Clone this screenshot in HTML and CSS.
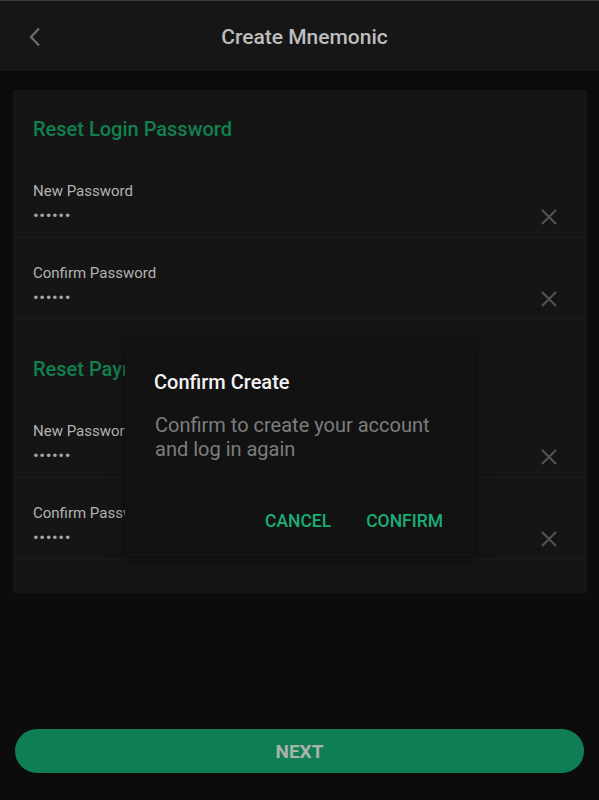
FILE: index.html
```html
<!DOCTYPE html>
<html>
<head>
<meta charset="utf-8">
<link rel="stylesheet" href="styles.css">
</head>
<body>
<div class="page">
  <header class="header">
    <button class="back" aria-label="Back">
      <svg width="14" height="20" viewBox="0 0 14 20"><path d="M11 1.5 L3 10 L11 18.5" fill="none" stroke="#6e6e6e" stroke-width="2.2"/></svg>
    </button>
    <h1 class="header-title">Create Mnemonic</h1>
  </header>

  <main class="main">
    <section class="card">
      <div class="group">
        <h2 class="group-title">Reset Login Password</h2>
        <div class="row">
          <div class="field">
            <div class="label">New Password</div>
            <div class="value">••••••</div>
          </div>
          <svg class="clear" width="16" height="16" viewBox="0 0 16 16"><path d="M1 1 L15 15 M15 1 L1 15" stroke="#555" stroke-width="2"/></svg>
        </div>
        <div class="row">
          <div class="field">
            <div class="label">Confirm Password</div>
            <div class="value">••••••</div>
          </div>
          <svg class="clear" width="16" height="16" viewBox="0 0 16 16"><path d="M1 1 L15 15 M15 1 L1 15" stroke="#555" stroke-width="2"/></svg>
        </div>
      </div>
      <div class="group group-second">
        <h2 class="group-title">Reset Payment Password</h2>
        <div class="row">
          <div class="field">
            <div class="label">New Password</div>
            <div class="value">••••••</div>
          </div>
          <svg class="clear" width="16" height="16" viewBox="0 0 16 16"><path d="M1 1 L15 15 M15 1 L1 15" stroke="#555" stroke-width="2"/></svg>
        </div>
        <div class="row">
          <div class="field">
            <div class="label">Confirm Password</div>
            <div class="value">••••••</div>
          </div>
          <svg class="clear" width="16" height="16" viewBox="0 0 16 16"><path d="M1 1 L15 15 M15 1 L1 15" stroke="#555" stroke-width="2"/></svg>
        </div>
      </div>
    </section>
  </main>

  <div class="footer">
    <button class="next">NEXT</button>
  </div>

  <div class="dialog">
    <div class="dialog-title">Confirm Create</div>
    <div class="dialog-body">Confirm to create your account and log in again</div>
    <div class="dialog-actions">
      <button class="dialog-btn">CANCEL</button>
      <button class="dialog-btn">CONFIRM</button>
    </div>
  </div>
</div>
</body>
</html>
```
FILE: styles.css
```css
* { box-sizing: border-box; }
html, body { margin: 0; padding: 0; }
body {
  background: #0c0c0c;
  font-family: Roboto, "Liberation Sans", sans-serif;
}
.page {
  position: relative;
  width: 599px;
  height: 800px;
  display: flex;
  flex-direction: column;
  overflow: hidden;
}
.header {
  height: 71px;
  background: #161616;
  border-top: 1px solid #3a3a3a;
  display: flex;
  align-items: center;
  justify-content: center;
  position: relative;
  flex-shrink: 0;
}
.back {
  position: absolute;
  left: 28px;
  top: 26px;
  background: none;
  border: 0;
  padding: 0;
  width: 14px;
  height: 20px;
  display: block;
}
.back svg { display: block; }
.header-title {
  margin: 0 0 0 10px;
  font-size: 21px;
  font-weight: 500;
  color: #bdbdbd;
  position: relative;
  top: 1px;
}
.main {
  padding: 19px 12px 0 13px;
  flex: 1;
}
.card {
  background: #151515;
  padding-bottom: 33px;
}
.group-second { margin-top: 10px; }
.group-title {
  margin: 0;
  padding: 27px 20px 15px;
  font-size: 20px;
  line-height: 24px;
  font-weight: 500;
  color: #11804f;
}
.row {
  height: 82px;
  border-bottom: 1px solid #1b1b1b;
  display: flex;
  align-items: flex-end;
  justify-content: space-between;
  padding: 0 30px 12px 20px;
}
.field { display: flex; flex-direction: column; }
.label {
  font-size: 15px;
  line-height: 20px;
  color: #b3b3b3;
}
.value {
  margin-top: 4px;
  font-size: 17px;
  line-height: 20px;
  color: #a8a8a8;
  letter-spacing: 0.6px;
}
.clear { display: block; margin-bottom: 0; }
.footer {
  padding: 0 15px 27px;
  flex-shrink: 0;
}
.next {
  width: 569px;
  height: 44px;
  border: 0;
  border-radius: 22px;
  background: #107e54;
  color: #a9b3ab;
  font-family: Roboto, "Liberation Sans", sans-serif;
  font-size: 19px;
  font-weight: 700;
  display: block;
}
.dialog {
  position: absolute;
  left: 125px;
  top: 342px;
  width: 350px;
  height: 215px;
  background: #121212;
  box-shadow: 0 0 12px rgba(0,0,0,0.55);
  padding: 28px 32px 0 29px;
}
.dialog-title {
  font-size: 20px;
  line-height: 24px;
  font-weight: 500;
  color: #f2f2f2;
}
.dialog-body {
  margin-top: 19px;
  padding-left: 1px;
  font-size: 20px;
  line-height: 24px;
  color: #7d7d7d;
}
.dialog-actions {
  margin-top: 48px;
  display: flex;
  justify-content: flex-end;
  gap: 35px;
}
.dialog-btn {
  background: none;
  border: 0;
  padding: 0;
  font-family: Roboto, "Liberation Sans", sans-serif;
  font-size: 17.5px;
  line-height: 24px;
  font-weight: 500;
  color: #1bae76;
}
```
